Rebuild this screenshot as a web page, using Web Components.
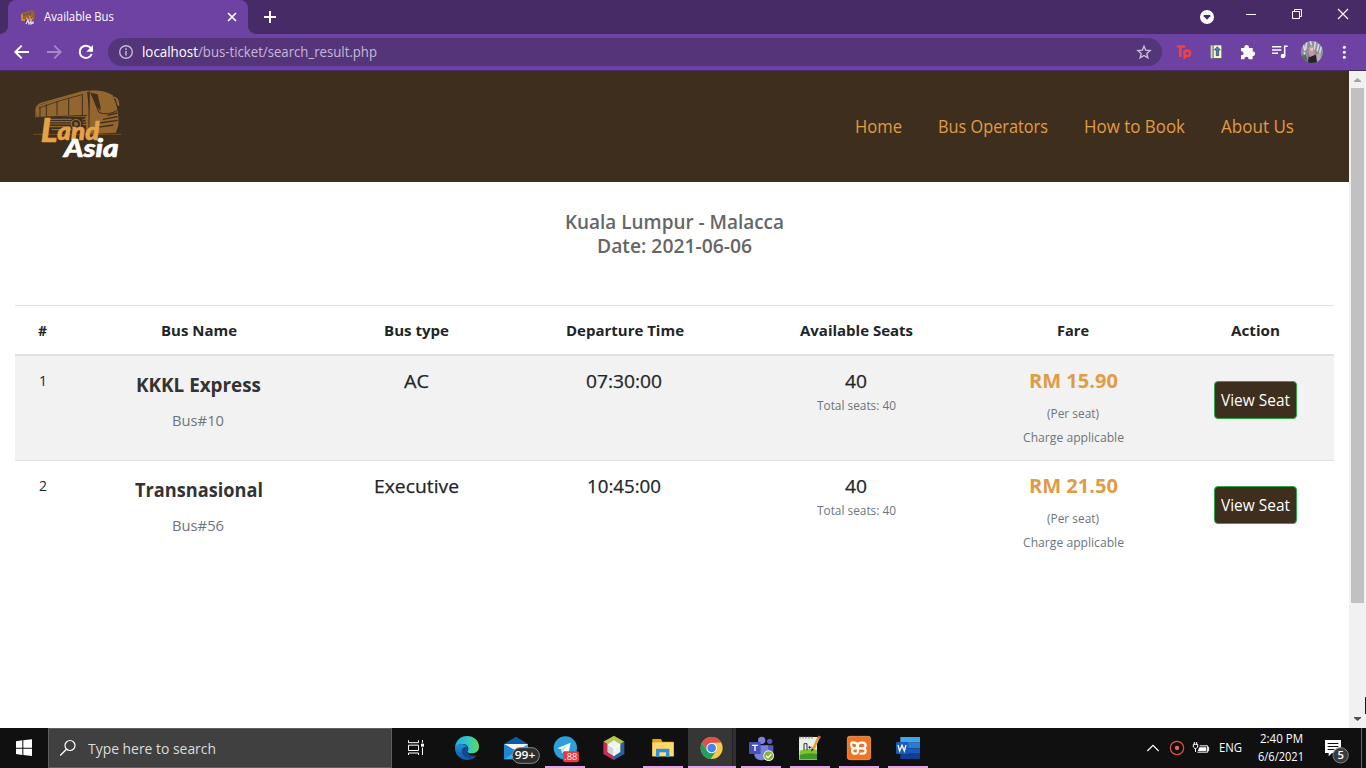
<!DOCTYPE html>
<html lang="en">
<head>
<meta charset="utf-8">
<title>Available Bus</title>
<style>
body{margin:0;width:1366px;height:768px;overflow:hidden;font-family:"Open Sans","Noto Sans",sans-serif}
</style>
</head>
<body>
<desktop-screen></desktop-screen>
<script>
function define(name, html, setup) {
  const tpl = document.createElement('template');
  tpl.innerHTML = '<style>*{box-sizing:border-box}svg{display:block;flex:none}</style>' + html;
  customElements.define(name, class extends HTMLElement {
    constructor() {
      super();
      this.attachShadow({ mode: 'open' });
    }
    connectedCallback() {
      if (this.ready) return;
      this.ready = true;
      this.shadowRoot.appendChild(tpl.content.cloneNode(true));
      if (setup) setup.call(this, this.shadowRoot);
    }
  });
}

/* Single-line label condensed or widened to the width in its "w" attribute. */
define('fit-text', `<style>
:host{display:inline-block;white-space:nowrap;text-align:left;vertical-align:top;flex:none}
span{display:inline-block;transform-origin:0 50%;vertical-align:top}
</style><span><slot></slot></span>`, function (root) {
  const w = +this.getAttribute('w');
  if (!w) return;
  const s = root.querySelector('span');
  const n = s.getBoundingClientRect().width;
  this.style.width = w + 'px';
  if (n) s.style.transform = 'scaleX(' + w / n + ')';
});

define('tab-strip', `<style>
:host{display:flex;height:34px;background:#472b66;color:#fff;position:relative}
.tab{margin-left:8px;width:240px;height:34px;background:#6e42a2;border-radius:8px 8px 0 0;display:flex;align-items:center;font-size:12px;line-height:18px;position:relative}
.tab:before,.tab:after{content:"";position:absolute;bottom:0;width:8px;height:8px}
.tab:before{left:-8px;background:radial-gradient(circle at 0 0,transparent 7.6px,#6e42a2 8.2px)}
.tab:after{right:-8px;background:radial-gradient(circle at 100% 0,transparent 7.6px,#6e42a2 8.2px)}
.fav{margin:0 8px 0 12px}
fit-text{margin-top:-1px}
.close{margin-left:110px}
.plus{margin-left:13px}
.win{margin-left:auto}
</style>
<div class="tab">
<svg class="fav" width="16" height="16" viewBox="0 0 16 16"><path d="M1.500 4L12 1l2.500 2v7l-9 1-4-1z" fill="#96642f"/><path d="M4 5v2M7 4v2M10 3v3M5 9h8" stroke="#5d3a70"/><path d="M2 5v6h3M6 8l2 3M10 7v4l3-2" stroke="#e0963c" stroke-width="1.400" fill="none"/><path d="M6 15l2-4 1 4 2-3v3l2-2v2" stroke="#ddd" stroke-width="1.200" fill="none"/></svg>
<fit-text w="70">Available Bus</fit-text>
<svg class="close" width="16" height="16" viewBox="0 0 16 16"><path d="M4 4l8 8M12 4l-8 8" stroke="#fff" stroke-width="1.7"/></svg>
</div>
<svg class="plus" width="18" height="34" viewBox="0 0 18 34"><path d="M3 17h12M9 11v12" stroke="#fff" stroke-width="2"/></svg>
<svg class="win" width="246" height="34" viewBox="0 0 738 102"><circle cx="261" cy="51" r="21" fill="#fff"/><path d="M251 45h20v4l-10 10-10-10z" fill="#472b66"/><path d="M378 43.5h30" stroke="#fff" stroke-width="3"/><path d="M517.5 34.500h21v21h-21zM523.500 34v-5.500h21v21H539" fill="none" stroke="#fff" stroke-width="3"/><path d="M654 27l30 30M684 27l-30 30" stroke="#fff" stroke-width="3.500"/></svg>`);

define('address-bar', `<style>
:host{display:flex;height:37px;background:#6e42a2;border-bottom:1px solid #472b66;position:relative}
.omni{width:1054px;height:28px;margin-top:4px;background:#55357a;border-radius:14px;display:flex;align-items:center;font-size:14px;line-height:20px;color:#c6b8d6}
.omni b{font-weight:400;color:#fff}
.info{margin:0 8px 0 10px}
.star{margin-left:auto;margin-right:9px}
</style>
<svg width="108" height="36" viewBox="0 102 324 108"><path d="M87 156H48M65 137l-19 19 19 19" fill="none" stroke="#fff" stroke-width="6"/><path d="M141 156h39M163 137l19 19-19 19" fill="none" stroke="#a588c8" stroke-width="5.500"/><path d="M273 145a18.500 18.500 0 1 0 2 17" fill="none" stroke="#fff" stroke-width="6"/><path d="M279 135v20h-20z" fill="#fff"/></svg>
<div class="omni"><svg class="info" width="16" height="16" viewBox="0 0 16 16"><circle cx="8" cy="8" r="6.300" fill="none" stroke="#c6b8d6" stroke-width="1.400"/><path d="M8 7v4.500M8 4.300v1.600" stroke="#c6b8d6" stroke-width="1.500"/></svg><fit-text w="56"><b>localhost</b></fit-text><fit-text w="179">/bus-ticket/search_result.php</fit-text>
<svg class="star" width="18" height="18" viewBox="0 0 18 18"><path d="M9 3.200l1.700 4 4.400.4-3.300 2.900 1 4.300L9 12.500l-3.800 2.300 1-4.300-3.300-2.900 4.400-.4z" fill="none" stroke="#cbbfd8" stroke-width="1.400"/></svg></div>
<svg width="204" height="36" viewBox="126 102 612 108">
<path d="M170 139.500h26M181 140v31" fill="none" stroke="#f5403b" stroke-width="8"/><path d="M193.500 150v27" stroke="#f5403b" stroke-width="7"/><circle cx="202" cy="160" r="8.500" fill="none" stroke="#f5403b" stroke-width="7"/>
<path d="M269 134h38v44h-38z" fill="#59636b"/><path d="M272 136h6v39h-6z" fill="#d8cbd7"/><path d="M281 136h23v38h-23z" fill="#fff5d6"/><path d="M292 140l9 10h-5v17h-7v-17h-6z" fill="#2f8ed2" stroke="#263b50" stroke-width="2"/>
<path d="M365 144h8c-2-12 16-12 14 0h11v11c10-2 10 14 0 13v10h-12c0-10-13-10-13 0h-10v-12c10 1 10-13 0-12v-10z" fill="#fff"/>
<path d="M456 140h28M456 150h28M456 160h18M494 169v-30h9" fill="none" stroke="#fff" stroke-width="4.500"/><circle cx="489" cy="168" r="7" fill="#fff"/>
<clipPath id="av"><circle cx="576" cy="156" r="33"/></clipPath><g clip-path="url(#av)"><path d="M540 120h72v72h-72z" fill="#8b8e98"/><path d="M549 132l6 20M560 124l-3 24M570 122l5 14M586 124l-3 25M596 132l-4 22M604 140l-5 20M552 156l6 14" stroke="#d5dbe1" stroke-width="5"/><path d="M540 170l18-8 6 30h-24z" fill="#5e6b5b"/><path d="M563 192l4-28 10-6 12 9 3 25z" fill="#25222c"/><path d="M566 145c2-9 14-9 16 0l2 20-16 7z" fill="#d193a6"/><path d="M571 144h8v8h-8z" fill="#e9c6b7"/><path d="M589 165l13-9v24l-11 7z" fill="#b8aba9"/></g>
<g fill="#fff"><circle cx="673" cy="142" r="4.500"/><circle cx="673" cy="157" r="4.500"/><circle cx="673" cy="172" r="4.500"/></g></svg>`);

define('site-logo', `<style>:host{display:block;flex:none}text{font-family:Lato,sans-serif;font-weight:900;font-style:italic;stroke-width:2;stroke-linejoin:round}</style>
<svg width="120" height="95" viewBox="0 0 360 285">
<path d="M50 79Q130 50 201 33l9 84-2 46-8-1-4-52-144 2-4-20z" fill="#94662f"/><path d="M209 32q45-2 68 14l9 20q12 35 9 70l-7 22-78 4-8-22 6-24z" fill="#94662f"/>
<path d="M48 112V88q3-14 20-19l118-33q15-3 22-2M209 35q40-5 69 13M275 52c15-2 20 5 21 26" fill="none" stroke="#94662f" stroke-width="4"/><path d="M284 52q16 5 13 26-8-3-7-12z" fill="#94662f"/>
<path d="M56 84q70-26 130-40" stroke="#3e2e1e" stroke-width="2.500" fill="none"/>
<path d="M60 80v31M79 73v36M111 64v42M146 55v50M187 42v66M54 112l147-6M207 35v125M213 38l24 60q30 9 55-7M221 49q12 35 20 43" stroke="#3e2e1e" stroke-width="3" fill="none"/>
<path d="M211 38l22 5 10 45-12-6z" fill="#3e2e1e"/>
<path d="M262 106l30-7M249 118l44-8M238 129l55-8M230 142l50-7" stroke="#3e2e1e" stroke-width="4"/>
<path d="M80 118h75M82 125h74M84 132h68M88 140h62M95 149h60M188 118l12-1M188 126h12M188 134h12" stroke="#94662f" stroke-width="3.500"/><path d="M40 163h264" stroke="#725020" stroke-width="3"/>
<circle cx="168" cy="132" r="14" fill="#3e2e1e" stroke="#94662f" stroke-width="4"/><circle cx="168" cy="132" r="6" fill="#94662f"/>
<text x="62" y="186" font-size="74" fill="#e5a348" stroke="#e5a348" textLength="176" lengthAdjust="spacingAndGlyphs"><tspan font-size="98">L</tspan><tspan dy="-6">and</tspan></text>
<text x="132" y="230" font-size="76" fill="#fff" stroke="#fff" textLength="164" lengthAdjust="spacingAndGlyphs">Asia</text></svg>`);

define('site-header', `<style>
:host{display:flex;height:111px;background:#3e2e1e;color:#e09c45;padding:9px 55px 0 20px;justify-content:space-between}
nav{display:flex;gap:36px;padding-top:33px;font-size:17.6px;line-height:26px}
</style><site-logo></site-logo>
<nav><fit-text w="47">Home</fit-text><fit-text w="110">Bus Operators</fit-text><fit-text w="101">How to Book</fit-text><fit-text w="73">About Us</fit-text></nav>`);

define('bus-row', `<style>
:host{display:grid;grid-template-columns:55px 257px 179px 237px 226px 208px 157px;height:104px;padding-top:12px;text-align:center;line-height:24px;color:#212529;font-size:15px}
:host([striped]){background:#f2f2f2}
:host([ruled]){border-top:1px solid #dee2e6;height:105px}
.big{font-size:19px;-webkit-text-stroke:.25px #212529;padding-top:1px}
.time{margin-left:-1px}
.name{font-size:19px;font-weight:700;color:#333;padding-top:5px;margin-bottom:11px}
.muted{color:#6c757d}
.s{font-size:12px}
.total{padding-top:1px}
.fare{font-size:19px;font-weight:700;color:#e09c45;padding-top:1px;margin-bottom:9px}
.code{margin-left:-1px}
.btn{display:inline-flex;justify-content:center;align-items:center;width:83px;height:38px;margin-top:13px;border:1px solid #28a745;border-radius:4px;background:#3e2e1e;color:#fff;font-size:15.5px}
</style>
<div><fit-text w="8"><slot name="no"></slot></fit-text></div>
<div><div class="name"><slot name="name"></slot></div><div class="muted code"><slot name="code"></slot></div></div>
<div class="big"><slot name="type"></slot></div>
<div class="big time"><slot name="time"></slot></div>
<div><div class="big"><fit-text w="22">40</fit-text></div><div class="muted s total"><fit-text w="79">Total seats: 40</fit-text></div></div>
<div><div class="fare"><slot name="fare"></slot></div><div class="muted s"><fit-text w="52">(Per seat)</fit-text></div><div class="muted s"><fit-text w="101">Charge applicable</fit-text></div></div>
<div><span class="btn"><fit-text w="69">View Seat</fit-text></span></div>`);

define('bus-table', `<style>
:host{display:block;width:1319px}
.head{display:grid;grid-template-columns:55px 257px 179px 237px 226px 208px 157px;height:51px;border-top:1px solid #dee2e6;border-bottom:2px solid #dee2e6;padding-top:12px;text-align:center;font-size:15px;font-weight:700;line-height:24px;color:#212529}
</style>
<div class="head"><div><fit-text w="9">#</fit-text></div><div><fit-text w="76">Bus Name</fit-text></div><div><fit-text w="65">Bus type</fit-text></div><div><fit-text w="118">Departure Time</fit-text></div><div><fit-text w="113">Available Seats</fit-text></div><div><fit-text w="32">Fare</fit-text></div><div><fit-text w="49">Action</fit-text></div></div>
<bus-row striped><span slot="no">1</span><fit-text w="125" slot="name">KKKL Express</fit-text><fit-text w="52" slot="code">Bus#10</fit-text><fit-text w="25" slot="type">AC</fit-text><fit-text w="76" slot="time">07:30:00</fit-text><fit-text w="89" slot="fare">RM 15.90</fit-text></bus-row>
<bus-row ruled><span slot="no">2</span><fit-text w="128" slot="name">Transnasional</fit-text><fit-text w="52" slot="code">Bus#56</fit-text><fit-text w="85" slot="type">Executive</fit-text><fit-text w="74" slot="time">10:45:00</fit-text><fit-text w="89" slot="fare">RM 21.50</fit-text></bus-row>`);

define('page-scrollbar', `<style>
:host{display:flex;flex-direction:column;width:17px;background:#f1f1f1;flex:none}
.thumb{width:13px;height:515px;margin-left:2px;background:#c1c1c1}
.end{margin-top:auto}
</style><svg width="17" height="17" viewBox="0 0 17 17"><path d="M5 11h7v-1L8.500 7 5 10z" fill="#a3a3a3"/></svg><div class="thumb"></div>
<svg class="end" width="17" height="35" viewBox="0 0 17 35"><path d="M5 24h7v1l-3.500 3L5 25z" fill="#505050"/><path d="M16 4h1v17h-1z" fill="#17151f"/></svg>`);

define('web-page', `<style>
:host{display:flex;height:657px;background:#fff}
.view{width:1349px}
h5{margin:28px 0 47px;text-align:center;font-size:19px;line-height:24px;font-weight:600;color:#666}
h5 div{height:24px}
bus-table{margin-left:15px}
</style><div class="view"><site-header></site-header>
<h5><div><fit-text w="219">Kuala Lumpur - Malacca</fit-text></div><div><fit-text w="155">Date: 2021-06-06</fit-text></div></h5>
<bus-table></bus-table></div><page-scrollbar></page-scrollbar>`);

define('task-button', `<style>
:host{display:block;width:48px;height:40px;position:relative}
:host([open])::after{content:"";position:absolute;left:4px;right:4px;bottom:0;height:2px;background:#e3a1ea}
:host([active]){background:linear-gradient(90deg,#363636 44px,#222 44px,#222 45px,#303030 45px)}
:host([active])::after{left:0;right:0}
</style><slot></slot>`);

define('task-bar', `<style>
:host{display:flex;height:40px;background:#101010;color:#fff}
.search{width:344px;height:40px;background:#404040;border:1px solid #606060;display:flex;align-items:center;font-size:14.500px;line-height:20px;color:#dcdcdc}
.search svg{margin:0 11px 0 10px}
.search fit-text{padding-top:1px}
.apps{display:flex;gap:1px;margin-left:3px}
.tray{display:flex;margin-left:auto;align-items:center;font-size:12px}
.eng{margin-left:5px;margin-top:-1px}
.clock{width:70px;margin-left:4px;margin-top:-2px;text-align:center;font-size:11.800px;line-height:18px}
.clock div{height:18px}
.note{margin-left:2px}
.edge{width:5px;height:40px;margin-left:7px;border-left:1px solid #666}
text{font-family:"Open Sans",sans-serif}
</style>
<svg width="48" height="40" viewBox="0 9 144 120"><path d="M48 49l19-3v22H48zM70 46l26-3v25H70zM48 71h19v19l-19-3zM70 71h26v22l-26-3z" fill="#fff"/></svg>
<div class="search"><svg width="18" height="18" viewBox="0 0 18 18"><circle cx="11" cy="6.500" r="5" fill="none" stroke="#fff" stroke-width="1.200"/><path d="M7.500 10.200L1.200 16.500" stroke="#fff" stroke-width="1.300"/></svg><fit-text w="128">Type here to search</fit-text></div>
<svg width="48" height="40" viewBox="1176 9 144 120"><path d="M1225.500 46v7h30v-7M1225.500 90v-6h30v6M1225.500 60.500h30v16h-30zM1267.500 45v8M1267.500 68v22" fill="none" stroke="#fff" stroke-width="3"/><path d="M1263 56h9v9h-9z" fill="#fff"/></svg>
<div class="apps">
<task-button><svg width="48" height="40" viewBox="9 9 144 120"><defs><linearGradient id="e1" x1="0" y1=".3" x2="1" y2=".3"><stop stop-color="#29a8e6"/><stop offset=".55" stop-color="#31c9c6"/><stop offset="1" stop-color="#66d852"/></linearGradient><linearGradient id="e2" x2="0" y2="1"><stop stop-color="#1995d8"/><stop offset="1" stop-color="#1454a5"/></linearGradient></defs><path d="M45 68C47 46 62 33 81 33c22 0 36 15 36 32 0 14-11 20-22 20-10 0-15-4-12-8 5-6 1-19-13-20-13-1-21 5-25 11z" fill="url(#e1)"/><path d="M45 67c7-13 30-13 37-1-12-2-20 10-14 20 8 14 29 14 42 5-6 9-17 14-29 14-21 0-37-16-36-38z" fill="url(#e2)"/><path d="M82 66c-13-1-20 10-14 20 8 14 29 14 42 5-18 5-33-5-28-18 1-3 2-5 0-7z" fill="#134a8f"/></svg></task-button>
<task-button><svg width="48" height="40" viewBox="156 9 144 120"><path d="M192 57l36-22 36 22v4h-72z" fill="#0d5ba6"/><path d="M192 57h72v46h-72z" fill="#3aaeea"/><path d="M192 57h72l-36 23z" fill="#f2f3f4"/><path d="M192 57v46l38-25z" fill="#1e85d1"/><rect x="217" y="68" width="81" height="47" rx="23" fill="#2e2e2e" stroke="#8b8b8b" stroke-width="3"/><text x="224" y="102" font-size="31" font-weight="600" fill="#fff" textLength="62" lengthAdjust="spacingAndGlyphs">99+</text></svg></task-button>
<task-button open><svg width="48" height="40" viewBox="303 9 144 120"><circle cx="376" cy="69" r="35" fill="#2aa1dc"/><path d="M352 70l40-17-7 34-12-9-7 7-2-12z" fill="#fff"/><path d="M364 73l20-14-14 17-4 9z" fill="#bad8e8"/><rect x="369" y="79" width="48" height="33" rx="7" fill="#ed3738"/><text x="373" y="105" font-size="25" fill="#fff" textLength="39" lengthAdjust="spacingAndGlyphs">.88</text></svg></task-button>
<task-button><svg width="48" height="40" viewBox="450 9 144 120"><path d="M490 50l32-18 31 18-31 19z" fill="#b4c84b"/><path d="M490 50l32 19v36l-32-18z" fill="#c62d55"/><path d="M553 50l-31 19v36l31-18z" fill="#2b6096"/><path d="M503 58l19-12 19 12v23l-19 12-19-12z" fill="#edf1f2"/><path d="M503 58l19 11v24l-19-12z" fill="#cbd7dd"/><path d="M503 58l19 11 19-11M522 69v24" fill="none" stroke="#fff" stroke-width="3"/></svg></task-button>
<task-button open><svg width="48" height="40" viewBox="597 9 144 120"><path d="M637 42h26l4 8h34v44h-64z" fill="#e8a317"/><path d="M637 52h64v42h-64z" fill="#ffda69"/><path d="M648 71h40v25h-10V82h-20v14h-10z" fill="#318fdc"/></svg></task-button>
<task-button open active><svg width="48" height="40" viewBox="9 9 144 120"><circle cx="80" cy="69" r="33" fill="#f6ca45"/><path d="M51.400 52.500a33 33 0 0 1 57.200 0L80 53l-14 24z" fill="#dc5148"/><path d="M51.400 52.500A33 33 0 0 0 77 102l17-25H66z" fill="#20a05e"/><circle cx="80" cy="69" r="16" fill="#fff"/><circle cx="80" cy="69" r="13" fill="#4285f4"/></svg></task-button>
<task-button open><svg width="48" height="40" viewBox="156 9 144 120"><circle cx="230" cy="46" r="11" fill="#7982dc"/><circle cx="254" cy="49" r="8" fill="#535bc0"/><path d="M240 61h25v25c0 15-18 18-25 8z" fill="#535bc0"/><path d="M208 61h41v25c0 26-41 26-41 2z" fill="#7882dc"/><rect x="192" y="51" width="35" height="36" rx="3" fill="#4750b7"/><path d="M201 61h18M210 61v17" stroke="#fff" stroke-width="4"/><circle cx="251" cy="92" r="16" fill="#fff"/><circle cx="251" cy="92" r="13.500" fill="#83b529"/><path d="M243 92l6 6 10-11" fill="none" stroke="#fff" stroke-width="4"/></svg></task-button>
<task-button open><svg width="48" height="40" viewBox="303 9 144 120"><path d="M342 36h54v68h-54z" fill="#e9f0e5"/><path d="M344 77q25-8 52-3v28h-52z" fill="#79c82e"/><path d="M344 90q25-8 52-3v15h-52z" fill="#439728"/><path d="M345 34v7m9-7v7m9-7v7m9-7v7m9-7v7" stroke="#777" stroke-width="3"/><path d="M357 76V56h9v20M370 67h9M374 63v8M383 67h8M387 63v8" fill="none" stroke="#333" stroke-width="3"/><path d="M401 37l-16 35" stroke="#e2a42c" stroke-width="8"/><path d="M399 34l8 4" stroke="#d55" stroke-width="6"/><path d="M380 69l-2 11 9-6z" fill="#4f3922"/></svg></task-button>
<task-button open><svg width="48" height="40" viewBox="450 9 144 120"><rect x="487" y="34" width="70" height="70" rx="7" fill="#f07522" stroke="#f3b282" stroke-width="2"/><path d="M498 53h9q9 0 10 8 0 8-8 9-8 1-8 8 1 8 10 8 8 0 8-9V62q0-9 9-9h5q9 0 9 8 0 8-9 9 9 0 9 8 0 8-9 8h-9M498 53q-1 17 11 17h24" fill="none" stroke="#fff" stroke-width="6.500" stroke-linejoin="round"/></svg></task-button>
<task-button open><svg width="48" height="40" viewBox="597 9 144 120"><path d="M646 36h59v17h-59z" fill="#41a5ee"/><path d="M646 53h59v17h-59z" fill="#2b7cd3"/><path d="M646 70h59v16h-59z" fill="#185abd"/><path d="M646 86h59v16h-59z" fill="#103f91"/><rect x="633" y="51" width="37" height="36" rx="3" fill="#185abd"/><path d="M639 60l5 18 7-17 7 17 5-18" fill="none" stroke="#fff" stroke-width="4"/></svg></task-button>
</div>
<div class="tray">
<svg width="74" height="40" viewBox="30 114 222 120"><path d="M52 183l17-17 17 17" fill="none" stroke="#fff" stroke-width="3.500"/><circle cx="141" cy="174" r="20" fill="none" stroke="#e74f42" stroke-width="3.500"/><circle cx="141" cy="174" r="6.500" fill="#f06655"/><path d="M209 167.500h24v19h-31M233 172h3v10h-3M193 156v7M200 156v7M190 163h13v8l-5 5h-3l-5-5zM196.500 176v10" fill="none" stroke="#fff" stroke-width="3"/><path d="M208 172h21v11h-26z" fill="#fff"/></svg>
<fit-text class="eng" w="23">ENG</fit-text>
<div class="clock"><div><fit-text w="43">2:40 PM</fit-text></div><div><fit-text w="46">6/6/2021</fit-text></div></div>
<svg class="note" width="36" height="40" viewBox="564 114 108 120"><path d="M585 150h48v39h-27l-10 10v-10h-11z" fill="#fff"/><path d="M593 160.500h32M593 169.500h32M593 178.500h20" stroke="#101010" stroke-width="3"/><circle cx="632" cy="196" r="23" fill="#3b3b3b" stroke="#828282" stroke-width="3"/><text x="632" y="208" font-size="34" font-weight="600" text-anchor="middle" fill="#fff">5</text></svg>
<div class="edge"></div></div>`);

define('desktop-screen', `<style>:host{display:flex;flex-direction:column;width:1366px;height:768px;overflow:hidden}</style>
<tab-strip></tab-strip><address-bar></address-bar><web-page></web-page><task-bar></task-bar>`);
</script>
</body>
</html>
